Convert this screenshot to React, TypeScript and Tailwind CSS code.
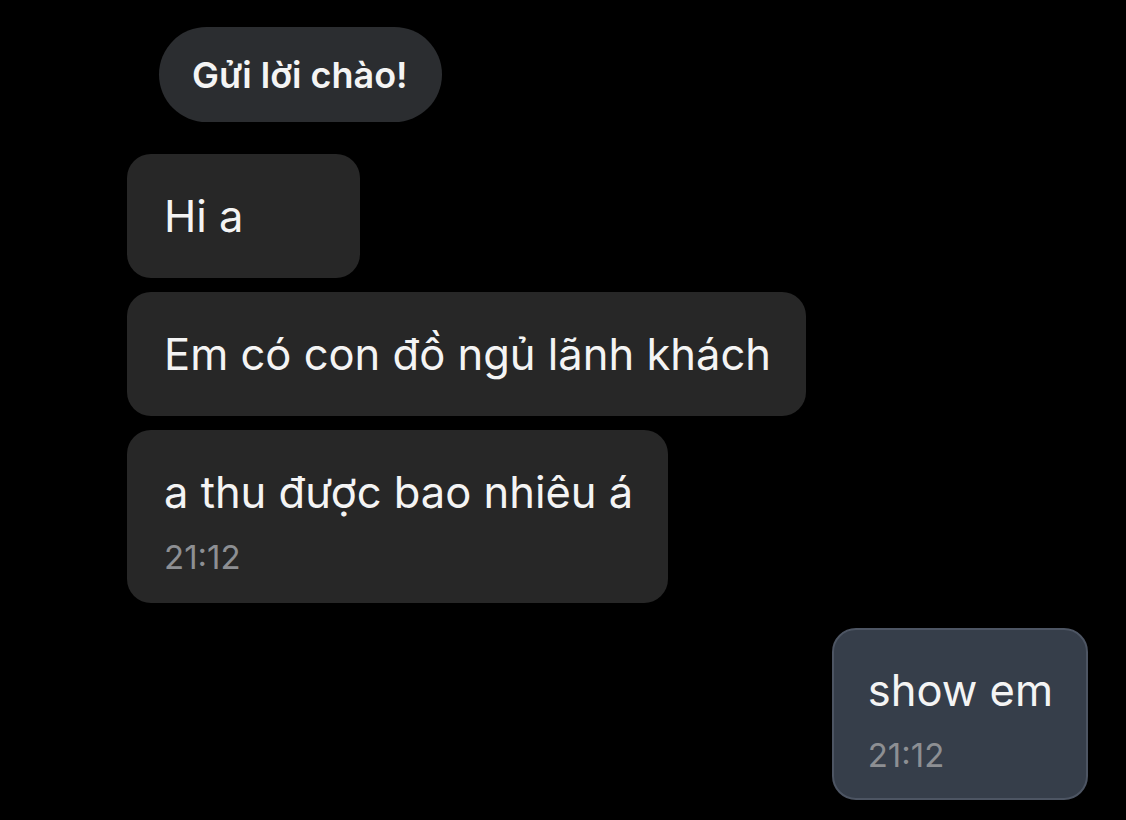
const font = { fontFamily: '"Inter", "Roboto", sans-serif' };

type Msg = { text: string; time?: string };

const incoming: Msg[] = [
  { text: "Hi a" },
  { text: "Em có con đồ ngủ lãnh khách" },
  { text: "a thu được bao nhiêu á", time: "21:12" },
];

function Bubble({ msg, mine }: { msg: Msg; mine?: boolean }) {
  return (
    <div
      className={
        "min-w-[233px] rounded-[24px] " +
        (mine
          ? "bg-[#363e4a] border-2 border-[#4d5563] pl-[34px] pr-[33px] pt-[34px] pb-[23px]"
          : "bg-[#272727] pl-[37px] pr-[35px] pt-[36px] " + (msg.time ? "pb-[26px]" : "pb-[36px]"))
      }
    >
      <div className="text-[43.5px] leading-[52px] text-[#f4f4f4] whitespace-nowrap">
        {msg.text}
      </div>
      {msg.time && (
        <div className="mt-[19px] text-[33px] leading-[40px] text-[#8d8f93]">
          {msg.time}
        </div>
      )}
    </div>
  );
}

export default function App() {
  return (
    <div className="min-h-screen w-full bg-black overflow-hidden" style={font}>
      <div className="flex flex-col pt-[27px] pl-[127px] pr-[38px]">
        <div className="ml-[32px] self-start rounded-full bg-[#2b2d30] h-[95px] pl-[33px] pr-[34px] flex items-center">
          <span className="text-[36px] font-semibold text-[#f4f4f4]">Gửi lời chào!</span>
        </div>

        <div className="mt-[32px] flex flex-col items-start gap-[14px]">
          {incoming.map((m, i) => (
            <Bubble key={i} msg={m} />
          ))}
        </div>

        <div className="mt-[25px] flex justify-end">
          <Bubble msg={{ text: "show em", time: "21:12" }} mine />
        </div>
      </div>
    </div>
  );
}
